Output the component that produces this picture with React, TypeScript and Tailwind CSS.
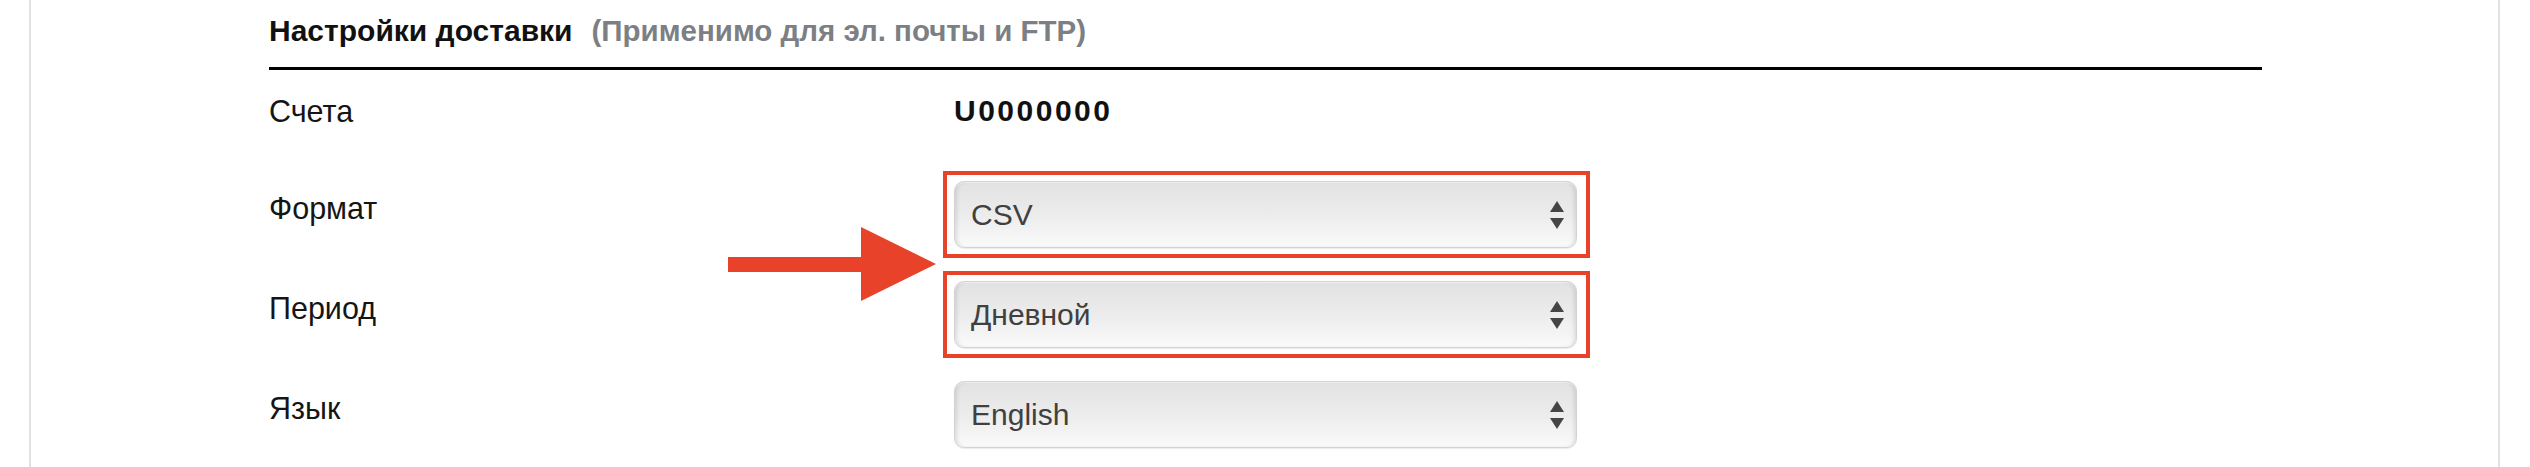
import React from 'react';

/**
 * Delivery settings block: heading, account row and three select rows.
 * The first two selects are marked with red annotation boxes and an arrow.
 */

const FONT = { fontFamily: '"Liberation Sans", Arial, sans-serif' };

function SelectArrows() {
  return (
    <svg width="14" height="28" viewBox="0 0 14 28" fill="#454545" aria-hidden>
      <path d="M7 0L14 11H0z" />
      <path d="M0 17h14L7 28z" />
    </svg>
  );
}

function FakeSelect({ value, marked }: { value: string; marked?: boolean }) {
  return (
    <div className="relative w-[623px]">
      {marked && (
        <span className="pointer-events-none absolute -left-[11px] -right-[13px] -top-[10px] -bottom-[10px] border-4 border-[#e8432a]" />
      )}
      <div className="flex h-[67px] items-center justify-between rounded-[10px] border border-[#d3d3d3] bg-gradient-to-b from-[#e2e2e2] via-[#ececec] to-[#fafafa] pl-[16px] pr-[12px] shadow-[inset_4px_0_5px_-3px_rgba(0,0,0,0.14),inset_-4px_0_5px_-3px_rgba(0,0,0,0.14),inset_0_1px_0_#f4f4f4,0_1px_1px_rgba(0,0,0,0.08)]">
        <span className="text-[30px] leading-none text-[#404040]">{value}</span>
        <SelectArrows />
      </div>
    </div>
  );
}

function Row({
  label,
  children,
  first,
}: {
  label: string;
  children: React.ReactNode;
  first?: boolean;
}) {
  return (
    <div className={first ? 'flex h-[111px] items-start pt-[25px]' : 'flex h-[100px] items-start'}>
      <div
        className={[
          'w-[685px] shrink-0 text-[30.5px] leading-[32px] text-[#151515]',
          first ? '' : 'pt-[11px]',
        ].join(' ')}
      >
        {label}
      </div>
      {children}
    </div>
  );
}

export default function App() {
  return (
    <div className="h-[467px] w-[2530px] overflow-hidden bg-white" style={FONT}>
      <div className="relative ml-[29px] h-full w-[2471px] border-x-2 border-[#e1e1e1] pl-[238px]">
        <div className="w-[1993px]">
          {/* Heading */}
          <div className="flex items-baseline border-b-[3px] border-black pt-[15px] pb-[20px] leading-[32px]">
            <span className="text-[30px] font-semibold text-[#111]">Настройки доставки</span>
            <span className="ml-[19px] text-[29.5px] font-semibold text-[#7c7f84]">
              (Применимо для эл. почты и FTP)
            </span>
          </div>

          <Row label="Счета" first>
            <span className="text-[30px] font-bold leading-[32px] tracking-[2.5px] text-[#111]">
              U0000000
            </span>
          </Row>
          <Row label="Формат">
            <FakeSelect value="CSV" marked />
          </Row>
          <Row label="Период">
            <FakeSelect value="Дневной" marked />
          </Row>
          <Row label="Язык">
            <FakeSelect value="English" />
          </Row>
        </div>

        {/* Annotation arrow pointing at the marked selects */}
        <svg
          className="absolute left-[697px] top-[227px]"
          width="208"
          height="74"
          viewBox="0 0 208 74"
          fill="#e8432a"
          aria-hidden
        >
          <rect x="0" y="30" width="134" height="15" />
          <path d="M133 0L208 37L133 74z" />
        </svg>
      </div>
    </div>
  );
}
